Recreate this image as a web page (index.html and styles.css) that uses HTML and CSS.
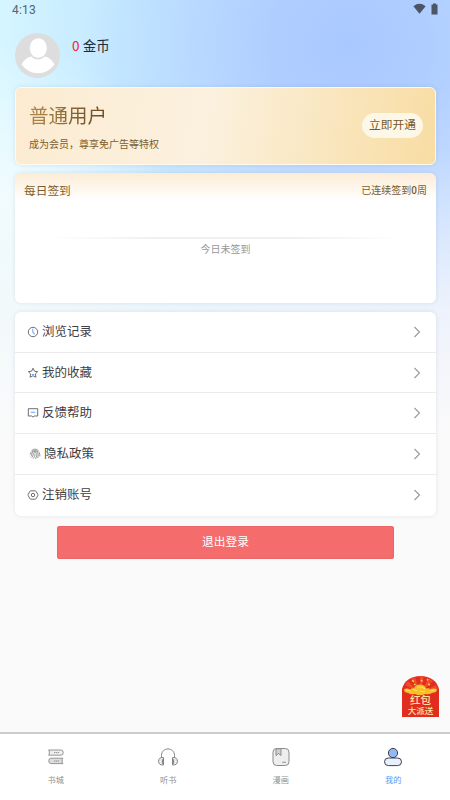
FILE: index.html
```html
<!DOCTYPE html>
<html lang="zh-CN">
<head>
<meta charset="UTF-8">
<meta name="viewport" content="width=device-width, initial-scale=1">
<title>我的</title>
<link rel="stylesheet" href="styles.css">
</head>
<body>
<div class="app">
  <header class="status">
    <span class="time">4:13</span>
    <span class="signals">
      <svg width="13" height="12" viewBox="0 0 13 12"><path d="M.4 3.200Q6.500-1.600 12.600 3.200L6.500 10.800Z" fill="#4c5563"/></svg>
      <svg width="7" height="12" viewBox="0 0 7 12"><path d="M2 .6h3v1h1.500v9.900H.5V1.600H2Z" fill="#4c5563"/></svg>
    </span>
  </header>

  <main class="content">
    <section class="profile">
      <svg class="avatar" viewBox="0 0 45 45"><circle cx="22.500" cy="22.500" r="22.500" fill="#ddd"/><ellipse cx="23.300" cy="15" rx="8.600" ry="9.800" fill="#fff"/><path d="M6.500 31.500Q10 25 16 23.500Q23 29.500 30 23.500Q36 25 39.500 31.500Q33 40.300 23 40.300T6.500 31.500Z" fill="#fff"/></svg>
      <p class="coins"><span class="coin-count">0</span> 金币</p>
    </section>

    <section class="card vip">
      <div>
        <h1 class="vip-title">普通用户</h1>
        <p class="vip-note">成为会员，尊享免广告等特权</p>
      </div>
      <button class="vip-button">立即开通</button>
    </section>

    <section class="card sign">
      <div class="sign-head"><h2>每日签到</h2><span>已连续签到<b>0</b>周</span></div>
      <div class="sign-line"></div>
      <p class="sign-state">今日未签到</p>
    </section>

    <nav class="card menu">
      <a class="row"><svg class="icon" viewBox="0 0 12 12"><circle cx="6" cy="6" r="4.700"/><path class="blue" d="M5.800 2.800V6l1.900 2.300"/></svg><span>浏览记录</span><svg class="arrow" viewBox="0 0 8 12"><path d="M1.500 1l5 5-5 5"/></svg></a>
      <a class="row"><svg class="icon" viewBox="0 0 12 12"><path d="M6 1.200l1.450 3 3.250.45-2.350 2.300.6 3.300L6 8.700l-2.950 1.550.6-3.300L1.300 4.650l3.250-.45Z"/><path class="blue" d="M4.700 7.500h2.600"/></svg><span>我的收藏</span><svg class="arrow" viewBox="0 0 8 12"><path d="M1.500 1l5 5-5 5"/></svg></a>
      <a class="row"><svg class="icon" viewBox="0 0 12 12"><path d="M1.300 1.700h9.400v7.300H7.300L6 10.100 4.700 9H1.300Z"/><path class="blue" d="M3.700 5.300h4.600"/></svg><span>反馈帮助</span><svg class="arrow" viewBox="0 0 8 12"><path d="M1.500 1l5 5-5 5"/></svg></a>
      <a class="row row-privacy"><svg class="icon print" viewBox="0 0 12 12"><path d="M2.500 2.700Q6-.5 9.500 2.700M1.200 6.400C1.400 1.500 10.500 1.300 10.800 6.500v1.800M1.500 8.400Q2.700 7.500 2.700 6.200C3 2.600 9 2.600 9.200 6.400c0 1.500-.1 2.500-.6 3.600M2.600 9.700Q4.200 8.200 4.200 6.300c.2-2 3.300-2 3.500 0 0 1.700-.3 3-1.200 4.500M4.200 10.700Q6 8.800 6 6.300"/></svg><span>隐私政策</span><svg class="arrow" viewBox="0 0 8 12"><path d="M1.500 1l5 5-5 5"/></svg></a>
      <a class="row"><svg class="icon" viewBox="0 0 12 12"><path d="M3.700 1.800h4.600Q8.800 1.800 9 2.200l1.900 3.400q.2.400 0 .8L9 9.800q-.2.400-.7.400H3.700q-.5 0-.7-.4L1.100 6.400q-.2-.4 0-.8L3 2.200q.2-.4.700-.4Z"/><circle cx="6" cy="6" r="1.700"/></svg><span>注销账号</span><svg class="arrow" viewBox="0 0 8 12"><path d="M1.500 1l5 5-5 5"/></svg></a>
    </nav>

    <button class="logout">退出登录</button>
  </main>

  <aside class="packet">
    <svg class="packet-art" viewBox="0 0 37 41">
      <path d="M0 41V13C2 5 9 0 18.500 0S35 5 37 13v28Z" fill="#e12d20"/>
      <path d="M18 17L3 9l3-4zM18 17L9 3l4-2zM18 17V0h4zM18 17L27 2l4 3zM18 17L34 9l2 4z" fill="#f04a2c"/>
      <path d="M2 13.500q3-2 6 0 2-2 4-1 1-4 6-4 5 0 6 4 3-1 4 1 4-2 7 0 0 3-5 3.500-3 2-7 1-5 2.500-10 0-4 1-7-1-4-.5-4-3.500Z" fill="#f8bd27"/>
      <path d="M4 14l5 1M11 13l4 2M15 11h5l3 2M18 15l5 1M28 15l5-1" stroke="#ffe15a" stroke-width="1.200" fill="none"/>
      <path d="M10 4.500l2 1M19 4l1.500 1.500M26 3l-1 1.500M12 9l1.500-1M26 8l2 1" stroke="#ffc440" stroke-width="1.500"/>
    </svg>
    <div class="packet-text"><span class="packet-top">红包</span><span class="packet-bottom">大派送</span></div>
  </aside>

  <footer class="tabs">
    <a class="tab"><svg viewBox="0 0 20 20" fill="#eee" stroke="#8b8b8b" stroke-width=".9"><path d="M2.500 3h12.700q2 0 2 2.600t-2 2.600H2.500l.8-1V4Z"/><path d="M17 11.200H4.800q-2 0-2 2.700t2 2.700H17l-.8-1v-3.400Z" fill="#ddd"/><path d="M8 5.600h5M8 14h5" stroke-dasharray="1.500 .5"/></svg><span>书城</span></a>
    <a class="tab"><svg viewBox="0 0 20 20" fill="#eee" stroke="#858585" stroke-width="1"><path d="M3.500 11V8.500C3.500-.2 16.500-.2 16.500 8.500V11" fill="none"/><path d="M5.500 10.500v7.500Q.6 18.300.6 14.200T5.500 10.500ZM14.500 10.500v7.500q4.900.3 4.900-3.800t-4.900-3.700Z"/><path d="M4.800 12.300v4.500M15.200 12.300v4.500" stroke-width="1.800"/></svg><span>听书</span></a>
    <a class="tab"><svg viewBox="0 0 20 20" fill="#eee" stroke="#8b8b8b" stroke-width="1"><rect x="2" y="1.500" width="16" height="17" rx="3.700"/><path d="M5 1.800v6.700l2.500-2 2.500 2V1.800Z" fill="#d0d0d0"/><path d="M11.300 15.300h3.600"/></svg><span>漫画</span></a>
    <a class="tab active"><svg viewBox="0 0 20 20" stroke="#3e4048" stroke-width="1"><circle cx="10" cy="6" r="4.600" fill="#92b9f6"/><rect x="1.500" y="11" width="17" height="7.600" rx="3.800" fill="#e8efff"/></svg><span>我的</span></a>
  </footer>
</div>
</body>
</html>
```
FILE: styles.css
```css
* { box-sizing: border-box; }
body, h1, h2, p { margin: 0; font-weight: 400; }
body { font-family: Roboto, "Noto Sans CJK SC", sans-serif; color: #3f4043; }
button { font: inherit; border: 0; padding: 0; }

.app {
  position: relative;
  display: flex;
  flex-direction: column;
  width: 450px;
  height: 800px;
  overflow: hidden;
  background:
    linear-gradient(180deg, rgba(250,250,250,0) 80px, rgba(250,250,250,.08) 150px, rgba(250,250,250,.75) 310px, #fafafa 430px),
    radial-gradient(ellipse 170px 160px at 0 200px, rgba(245,254,255,.8), rgba(245,254,255,0)),
    radial-gradient(circle at 350px 45px, #a9c8ff 0, rgba(174,205,255,.95) 80px, rgba(184,217,255,.7) 180px, rgba(195,232,255,.35) 270px, rgba(200,235,255,0) 350px),
    linear-gradient(90deg, #d6f6ff 0, #c3e8ff 35%, #c9d6ff 100%);
}

.status { display: flex; justify-content: space-between; height: 20px; padding: 3px 11px 0 12px; }
.time { font-size: 12px; line-height: 15px; letter-spacing: .2px; color: #56636d; }
.signals { display: flex; gap: 5px; margin-right: 1px; }

.content { flex: 1; padding: 13px 14px 0 15px; }
.profile { display: flex; gap: 12px; height: 54px; }
.avatar { width: 45px; height: 45px; }
.coins { padding-top: 3px; font-size: 13.500px; line-height: 20px; color: #1f2b38; }
.coin-count { font-family: "Noto Sans CJK SC", sans-serif; line-height: 1; color: #f5222d; }

.card { border-radius: 6px; background: #fff; box-shadow: 0 0 4px rgba(70,90,120,.14); }

.vip {
  display: flex;
  justify-content: space-between;
  height: 78px;
  padding: 15px 12px 0 13px;
  border: 1px solid #fffaf0;
  background: linear-gradient(100deg, #fcebd1 0, #fbf1df 45%, #f9e4b8 80%, #f8dca3 100%);
}
.vip-title {
  width: 80px;
  font-size: 19.500px;
  line-height: 28px;
  background: linear-gradient(100deg, #b48a4b, #60451f);
  -webkit-background-clip: text;
  background-clip: text;
  color: transparent;
}
.vip-note { margin-top: 6px; font-size: 10px; line-height: 16px; color: #7b5d2e; }
.vip-button { width: 61px; height: 25px; margin-top: 10px; border-radius: 13px; background: #fdf7e8; color: #78592b; font-size: 11.700px; line-height: 23px; }

.sign { height: 130px; margin-top: 8px; padding: 9px 9px 0; background: linear-gradient(180deg, #fcecd5 0, #fff 28px); }
.sign-head { display: flex; justify-content: space-between; height: 18px; line-height: 18px; color: #7b5d2e; }
.sign-head h2 { font-size: 11.700px; }
.sign-head span { font-size: 10px; }
.sign-head b { font-weight: 500; }
.sign-line { height: 2px; margin: 37px 25px 0; background: linear-gradient(90deg, transparent, #f0f0f0 30%, #f0f0f0 70%, transparent); }
.sign-state { margin-top: 3px; text-align: center; font-size: 10px; line-height: 16px; color: #999; }

.menu { margin-top: 9px; height: 203.500px; display: grid; grid-template-rows: repeat(5, 1fr); }
.row { display: flex; align-items: center; padding: 0 15px 0 12px; border-bottom: 1px solid #ebebeb; }
.row:last-child { border-bottom: 0; }
.row span { margin-left: 3px; flex: 1; font-size: 12.500px; line-height: 20px; }
.icon { width: 12px; height: 12px; fill: none; stroke: #65676c; stroke-width: .95; }
.icon .blue { stroke: #78a9f6; stroke-width: 1.100; }
.print { stroke-width: .7; }
.row-privacy { padding-left: 14px; }
.arrow { width: 8px; height: 12px; fill: none; stroke: #999; stroke-width: 1.100; }

.logout { display: block; width: 337px; height: 33px; margin: 10.500px auto 0 42px; border: 1px solid #e96769; border-radius: 2px; background: #f56c6c; color: #fff; font-size: 11.700px; line-height: 29px; }

.packet { position: absolute; left: 402px; top: 676px; width: 37px; height: 41px; }
.packet-art { display: block; width: 37px; height: 41px; }
.packet-text { position: absolute; inset: 19px 0 0; display: flex; flex-direction: column; align-items: center; color: #ffe4a0; font-weight: 500; white-space: nowrap; }
.packet-top { font-size: 10.500px; line-height: 12px; }
.packet-bottom { font-size: 8.500px; line-height: 9px; }

.tabs { display: grid; grid-template-columns: repeat(4, 1fr); height: 68px; border-top: 2px solid #cbcbcb; background: #fff; }
.tab { display: flex; flex-direction: column; align-items: center; padding-top: 13px; margin-left: -1px; font-size: 8.200px; line-height: 12px; color: #929292; }
.tab svg { width: 20px; height: 20px; margin-bottom: 7px; }
.active { color: #5a9bf6; }
```
